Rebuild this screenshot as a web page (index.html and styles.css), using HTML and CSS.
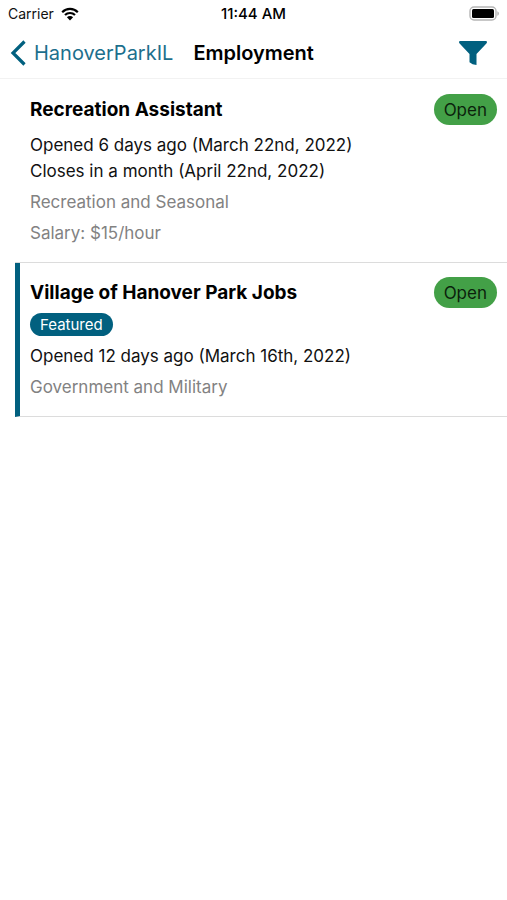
FILE: index.html
```html
<!DOCTYPE html>
<html lang="en">
<head>
  <meta charset="UTF-8" />
  <meta name="viewport" content="width=device-width, initial-scale=1.0"/>
  <title>Employment</title>
  <link rel="stylesheet" href="styles.css">
</head>
<body>
  <div class="status-bar">
    <div class="carrier">
      <span>Carrier</span>
      <svg class="wifi" viewBox="0 0 18 14" width="18" height="14" aria-hidden="true">
        <path d="M1.2 5.2a11 11 0 0 1 15.6 0M4 8.1a7 7 0 0 1 10 0" fill="none" stroke="#000" stroke-width="2.2"/>
        <path d="M5.9 10.2a4.4 4.4 0 0 1 6.2 0L9 13.4z"/>
      </svg>
    </div>
    <time class="clock">11:44 AM</time>
    <svg class="battery" viewBox="0 0 30 15" width="30" height="15" aria-hidden="true">
      <rect x="1" y="1" width="26" height="13" rx="4" fill="#fff" stroke="#b5b5b5" stroke-width="1.4"/>
      <rect x="3" y="3" width="22" height="9" rx="1.5"/>
      <path d="M28.3 5.2c2.2.8 2.2 3.8 0 4.600z" fill="#b5b5b5"/>
    </svg>
  </div>

  <header class="nav">
    <a href="#" class="back">
      <svg viewBox="0 0 16 26" width="16" height="26" aria-hidden="true">
        <path d="M14.500 1.500L3 13l11.500 11.500" fill="none" stroke="currentColor" stroke-width="3.200"/>
      </svg>
      <span>HanoverParkIL</span>
    </a>
    <h1>Employment</h1>
    <button class="filter" aria-label="Filter">
      <svg viewBox="0 0 28 24" width="28" height="24" aria-hidden="true">
        <path d="M1.2 0h25.6q1.2 0 1.2 1.100 0 .7-.6 1.300L17.500 13V24q-4.300-.2-7-2.800V13L.6 2.400Q0 1.800 0 1.100 0 0 1.200 0z" fill="currentColor"/>
      </svg>
    </button>
  </header>

  <main class="jobs">
    <article class="job">
      <div class="job-head">
        <h2>Recreation Assistant</h2>
        <span class="status">Open</span>
      </div>
      <div class="dates">
        <p>Opened 6 days ago (March 22nd, 2022)</p>
        <p>Closes in a month (April 22nd, 2022)</p>
      </div>
      <p class="detail">Recreation and Seasonal</p>
      <p class="detail">Salary: $15/hour</p>
    </article>

    <article class="job featured">
      <div class="job-head">
        <h2>Village of Hanover Park Jobs</h2>
        <span class="status">Open</span>
      </div>
      <span class="tag">Featured</span>
      <div class="dates">
        <p>Opened 12 days ago (March 16th, 2022)</p>
      </div>
      <p class="detail">Government and Military</p>
    </article>
  </main>
</body>
</html>
```
FILE: styles.css
```css
* {
  box-sizing: border-box;
}
body {
  margin: 0;
  font-family: Inter, sans-serif;
  font-size: 17px;
  line-height: 26px;
  color: #111;
  background: #fff;
}
h1, h2, p {
  margin: 0;
}
.status-bar {
  display: grid;
  grid-template-columns: 1fr auto 1fr;
  align-items: center;
  height: 27px;
  padding: 0 8px;
  font-size: 14px;
}
.carrier {
  display: flex;
  align-items: center;
  gap: 7px;
}
.clock {
  font-size: 15px;
  font-weight: 500;
  color: #000;
}
.battery {
  justify-self: end;
}
.nav {
  display: flex;
  align-items: center;
  gap: 20px;
  height: 52px;
  padding: 0 20px 0 10px;
  border-bottom: 1px solid #f2f2f2;
}
.nav h1 {
  font-size: 20px;
  font-weight: 600;
  color: #000;
}
.back {
  display: flex;
  align-items: center;
  gap: 8px;
  font-size: 20px;
  color: #1d6f8d;
  text-decoration: none;
}
.back svg {
  color: #01607f;
}
.filter {
  display: flex;
  margin-left: auto;
  padding: 0;
  border: none;
  background: none;
  color: #01607f;
  cursor: pointer;
}
.jobs {
  margin-left: 15px;
}
.job {
  padding: 15px 10px 16px 15px;
  border-bottom: 1px solid #dcdcdc;
}
.featured {
  padding-top: 14px;
  padding-left: 10px;
  border-left: 5px solid #01607f;
}
.job-head {
  display: flex;
  justify-content: space-between;
  align-items: center;
}
.job-head h2 {
  font-size: 19px;
  font-weight: 700;
  color: #000;
}
.status {
  padding: 3px 10px 2px;
  border-radius: 16px;
  background: #43a047;
  color: #0b1f0c;
}
.tag {
  display: block;
  width: fit-content;
  margin-top: 5px;
  padding: 0 10px;
  border-radius: 12px;
  background: #01607f;
  color: #fff;
  font-size: 15px;
  line-height: 23px;
}
.dates {
  margin-top: 7px;
}
.detail {
  margin-top: 5px;
  color: #828282;
}
```
